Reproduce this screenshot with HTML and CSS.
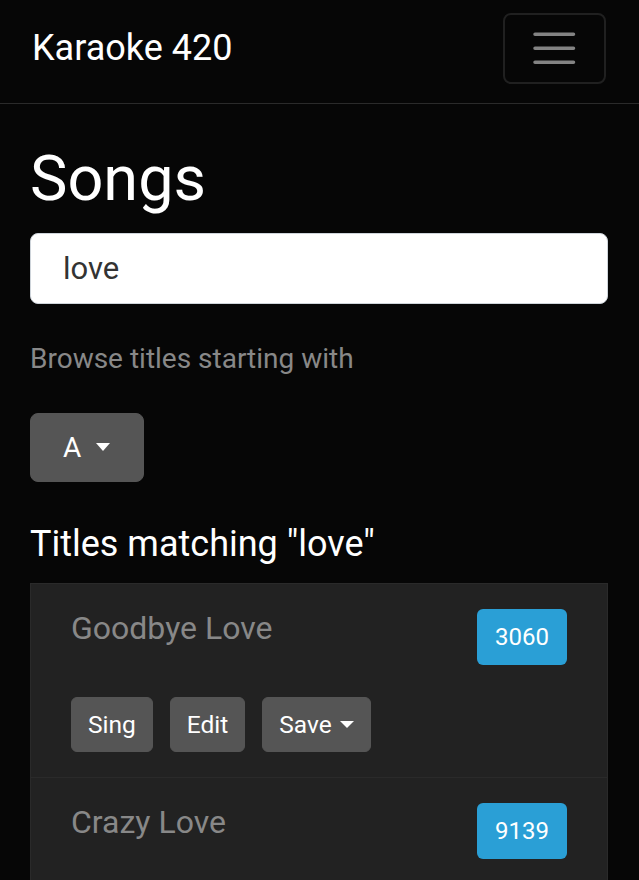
FILE: index.html
```html
<!DOCTYPE html>
<html lang="en">
<head>
<meta charset="utf-8">
<title>Karaoke 420 - Songs</title>
<link rel="stylesheet" href="styles.css">
</head>
<body>
<nav class="navbar">
  <a class="brand" href="#">Karaoke 420</a>
  <button class="toggler" type="button" aria-label="Toggle navigation">
    <svg class="toggler-icon" viewBox="0 0 30 30" width="52.5" height="52.5" aria-hidden="true">
      <path d="M4 7h22M4 15h22M4 23h22" stroke="rgba(255,255,255,0.5)" stroke-width="2" stroke-linecap="round" fill="none"/>
    </svg>
  </button>
</nav>
<main class="container">
  <h1 class="page-title">Songs</h1>
  <input class="search" type="text" value="love">
  <p class="muted-text">Browse titles starting with</p>
  <button class="btn btn-letter" type="button">A<span class="caret"></span></button>
  <h5 class="section-title">Titles matching "love"</h5>
  <ul class="list-group">
    <li class="list-item">
      <div class="item-head">
        <span class="song-title">Goodbye Love</span>
        <span class="badge">3060</span>
      </div>
      <div class="actions">
        <button class="btn btn-sm" type="button">Sing</button>
        <button class="btn btn-sm" type="button">Edit</button>
        <button class="btn btn-sm" type="button">Save<span class="caret caret-sm"></span></button>
      </div>
    </li>
    <li class="list-item">
      <div class="item-head">
        <span class="song-title">Crazy Love</span>
        <span class="badge">9139</span>
      </div>
      <div class="actions">
        <button class="btn btn-sm" type="button">Sing</button>
        <button class="btn btn-sm" type="button">Edit</button>
        <button class="btn btn-sm" type="button">Save<span class="caret caret-sm"></span></button>
      </div>
    </li>
  </ul>
</main>
</body>
</html>
```
FILE: styles.css
```css
* { box-sizing: border-box; }

html, body {
  margin: 0;
  padding: 0;
}

body {
  background: #060606;
  color: #adafae;
  font-family: Roboto, "Liberation Sans", sans-serif;
  font-size: 28px;
  line-height: 1.5;
}

.navbar {
  display: flex;
  align-items: center;
  justify-content: space-between;
  height: 104px;
  padding: 0 33px 6px 32px;
  border-bottom: 1px solid #2a2a2a;
}

.brand {
  color: #fff;
  text-decoration: none;
  font-size: 36px;
  line-height: 1.2;
}

.toggler {
  display: flex;
  align-items: center;
  justify-content: center;
  width: 103px;
  height: 71px;
  padding: 0;
  background: transparent;
  border: 2px solid #202020;
  border-radius: 8px;
}

.toggler-icon {
  display: block;
}

.container {
  padding: 37px 31px 0 30px;
}

.page-title {
  margin: 0 0 16px;
  color: #fff;
  font-size: 63px;
  font-weight: 400;
  line-height: 1.2;
}

.search {
  display: block;
  width: 100%;
  height: 71px;
  margin: 0 0 34px;
  padding: 0 32px;
  background: #fff;
  border: 1px solid #ced4da;
  border-radius: 8px;
  color: #333;
  font-family: inherit;
  font-size: 31px;
}

.muted-text {
  margin: 0 0 33px;
  color: #888;
  font-size: 28px;
  line-height: 42px;
}

.btn {
  display: inline-flex;
  align-items: center;
  background: #555;
  color: #fff;
  border: 1px solid #555;
  font-family: inherit;
  cursor: pointer;
}

.btn-letter {
  height: 69px;
  padding: 0 33px 0 32px;
  font-size: 28px;
  border-radius: 8px;
}

.caret {
  display: inline-block;
  width: 0;
  height: 0;
  margin-left: 15px;
  border-top: 8px solid #fff;
  border-left: 7.5px solid transparent;
  border-right: 7.5px solid transparent;
}

.caret-sm {
  margin-left: 8px;
  border-top-width: 7px;
  border-left-width: 7px;
  border-right-width: 7px;
}

.section-title {
  margin: 41px 0 17px;
  color: #fff;
  font-size: 36px;
  font-weight: 400;
  line-height: 1.2;
}

.list-group {
  margin: 0;
  padding: 0;
  list-style: none;
  border: 1px solid #2a2a2a;
  border-bottom: none;
}

.list-item {
  padding: 25px 40px 25px;
  background: #222;
  border-bottom: 1px solid #2a2a2a;
}

.item-head {
  display: flex;
  justify-content: space-between;
  align-items: flex-start;
}

.song-title {
  color: #888;
  font-size: 32px;
  line-height: 38px;
}

.badge {
  display: inline-flex;
  align-items: center;
  justify-content: center;
  width: 90px;
  height: 56px;
  background: #2a9fd6;
  color: #fff;
  font-size: 24px;
  border-radius: 6px;
}

.actions {
  display: flex;
  gap: 17px;
  margin-top: 32px;
}

.btn-sm {
  height: 55px;
  padding: 0 16px;
  font-size: 24.5px;
  border-radius: 6px;
}
```
